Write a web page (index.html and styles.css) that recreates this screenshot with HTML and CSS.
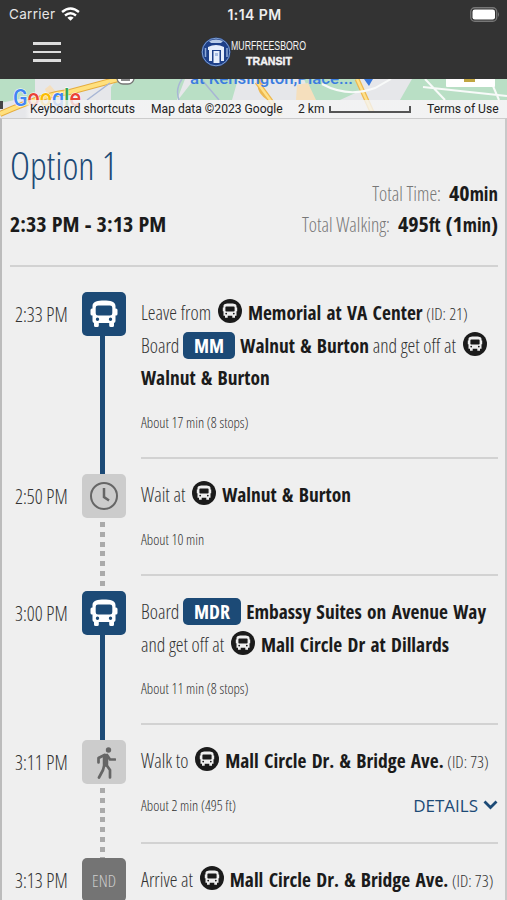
FILE: index.html
```html
<!DOCTYPE html>
<html lang="en">
<head>
<meta charset="utf-8">
<title>Murfreesboro Transit</title>
<link rel="stylesheet" href="styles.css">
</head>
<body>
<svg class="defs" width="0" height="0" aria-hidden="true">
  <symbol id="bus" viewBox="0 0 28 28">
    <path fill-rule="evenodd" d="M14 .5C8 .5 2.500 1.500 2.500 6v2.500H2Q.5 8.500 .5 10v4Q.5 15.500 2 15.500h.5V21q0 1.600 1.500 2v2.500Q4 27 5.500 27h1.800q1.500 0 1.500-1.500V23h10.400v2.500q0 1.500 1.500 1.500h1.800q1.500 0 1.500-1.500V23q1.500-.4 1.500-2v-5.500h.5q1.500 0 1.500-1.500v-4q0-1.500-1.500-1.500h-.5V6C25.500 1.500 20 .5 14 .5zM8 5.500h12q2.300 0 2.300 2.300v5.400q0 2.300-2.300 2.300H8q-2.300 0-2.300-2.300V7.800q0-2.300 2.300-2.300zM7.500 17.500a1.700 1.700 0 1 1 0 3.400a1.700 1.700 0 1 1 0-3.400zM20.500 17.500a1.700 1.700 0 1 1 0 3.400a1.700 1.700 0 1 1 0-3.400z"/>
  </symbol>
  <symbol id="stop" viewBox="0 0 24 24">
    <circle cx="12" cy="12" r="12" fill="#1b1b1b"/>
    <path fill="#efefef" fill-rule="evenodd" d="M12 4.500c-4 0-6.500.6-6.500 2.500v1.500H4.800v3.800h.7v4.400h1.500v2h2.700v-2h4.600v2h2.700v-2h1.500v-4.400h.7V8.500h-.7V7c0-1.900-2.500-2.500-6.500-2.500zM8.200 7.500h7.600q.8 0 .8.8v3.400q0 .8-.8.8H8.200q-.8 0-.8-.8V8.300q0-.8.8-.8zM8.200 13.700a.9.900 0 1 1 0 1.800a.9.900 0 1 1 0-1.800zM15.800 13.700a.9.900 0 1 1 0 1.800a.9.900 0 1 1 0-1.800z"/>
  </symbol>
</svg>

<header class="top">
  <div class="status">
    <div class="carrier">Carrier
      <svg class="wifi" viewBox="0 0 18 13"><g fill="none" stroke="#fff" stroke-width="2.300"><path d="M1 4.600Q9-2 17 4.600"/><path d="M3.800 7.900Q9 3.600 14.200 7.900"/></g><path fill="#fff" d="M9 13 6 10q3-2.300 6 0z"/></svg>
    </div>
    <div class="clock">1:14 PM</div>
    <svg class="battery" viewBox="0 0 30 15"><rect x=".75" y=".75" width="26" height="13.500" rx="4" fill="none" stroke="#777" stroke-width="1.300"/><rect x="2.500" y="2.500" width="22.500" height="10" rx="2.300" fill="#fff"/><path d="M28 5q2 2.500 0 5z" fill="#777"/></svg>
  </div>
  <nav class="bar">
    <div class="burger"><i></i><i></i><i></i></div>
    <div class="brand">
      <svg class="seal" viewBox="0 0 30 30"><circle cx="15" cy="15" r="14.500" fill="#1e4089"/><circle cx="15" cy="15" r="13.800" fill="none" stroke="#7f9fd0" stroke-width="1"/><path d="M8 4q7-3 14 0l-2 2H10z" fill="#b9cce8"/><path d="M7 10q8-4 16 0v3H7zM8 13h3v11H8zM12.500 14h6v12h-6zM20 13h3v11h-3z" fill="#e6eefb"/><path d="M14 16h3v3h-3z" fill="#a9bfe4"/><path d="M4.500 11v9M26 11v9" stroke="#8fabd8" stroke-width="1.500"/></svg>
      <svg class="wordmark" viewBox="0 0 76 30"><text class="word-a" x="0" y="13" textLength="75" lengthAdjust="spacingAndGlyphs">MURFREESBORO</text><text class="word-b" x="15" y="28" textLength="46" lengthAdjust="spacingAndGlyphs">TRANSIT</text></svg>
    </div>
  </nav>
</header>

<section class="map">
  <svg class="tiles" viewBox="0 0 507 39">
    <rect width="507" height="39" fill="#e6e7ea"/>
    <path d="M0 0h35v17L0 24zM111 8l6-8h68l-8 21h-66zM178 21l14-18 10-3h36l-6 21zM304 0h52l8 10-24 11h-28zM412 0h95v21H400z" fill="#b9dfc5"/>
    <path d="M45 10l5-4 7 8-8 6zM297 6l11-2 8 17h-20z" fill="#f5dfbd"/>
    <path d="M0 35Q45 15 70 13L118 0" fill="none" stroke="#e5ac3e" stroke-width="6"/><path d="M0 35Q45 15 70 13L118 0" fill="none" stroke="#ffe07d" stroke-width="4"/>
    <path d="M357 0l15 33M257 3l24 33M261 0q-4 12 8 19" fill="none" stroke="#edb850" stroke-width="5"/><path d="M357 0l15 33M257 3l24 33" fill="none" stroke="#ffe18a" stroke-width="2.500"/>
    <path d="M322 5Q348 19 375 9l16-9M425 0l20 21M423 8l84 9M490 0l9 21" fill="none" stroke="#f8faf9" stroke-width="2"/>
    <path d="M87 21l23-17M182 0q-7 10-3 21M202 1l17 20" fill="none" stroke="#a8b6d5" stroke-width="1.500"/>
    <rect x="117" y="-10" width="17" height="15" rx="6" fill="#fff" stroke="#777" stroke-width="1.300"/><path d="M121 1h9" stroke="#666" stroke-width="1.500"/>
    <path d="M364 0h9q-2 3-4 7q-3-4-5-7" fill="#3878dc"/>
    <text class="place" x="190" y="5" textLength="163" lengthAdjust="spacingAndGlyphs">at Kensington,Place...</text>
    <rect x="446" y="-8" width="49" height="16" rx="1" fill="#fff"/><path d="M464 0h11v3h-11z" fill="#c0a541"/>
    <path d="M0 22h3v8H0z" fill="#444"/>
    <text class="google" x="13" y="27" textLength="68" lengthAdjust="spacingAndGlyphs"><tspan fill="#4285f4">G</tspan><tspan fill="#ea4335">o</tspan><tspan fill="#fbbc04">o</tspan><tspan fill="#4285f4">g</tspan><tspan fill="#34a853">l</tspan><tspan fill="#ea4335">e</tspan></text>
  </svg>
  <div class="attribution">
    <span class="keys">Keyboard shortcuts</span><span class="data">Map data ©2023 Google</span><span class="scale">2 km <i></i></span><span class="terms">Terms of Use</span>
  </div>
</section>

<main class="panel">
  <div class="summary">
    <div>
      <h1>Option 1</h1>
      <div class="range">2:33 PM - 3:13 PM</div>
    </div>
    <div class="totals">
      <div><span class="label">Total Time:</span><b>40<small>min</small></b></div>
      <div><span class="label">Total Walking:</span><b>495<small>ft</small> (1<small>min</small>)</b></div>
    </div>
  </div>

  <div class="step ride s1">
    <div class="time">2:33 PM</div>
    <div class="rail"><div class="tile blue"><svg><use href="#bus"/></svg></div></div>
    <div class="body">
      <p>Leave from <svg class="stop"><use href="#stop"/></svg> <b>Memorial at VA Center</b> <span class="id">(ID: 21)</span></p>
      <p>Board <span class="route">MM</span> <b>Walnut &amp; Burton</b> and get off at <svg class="stop"><use href="#stop"/></svg></p>
      <p><b class="flush">Walnut &amp; Burton</b></p>
      <div class="about"><span>About 17 min (8 stops)</span></div>
    </div>
  </div>

  <div class="step s2">
    <div class="time">2:50 PM</div>
    <div class="rail"><div class="tile"><svg viewBox="0 0 28 28"><circle cx="14" cy="14" r="13" fill="none" stroke="#666" stroke-width="2"/><path d="M14 6v9l5 3.500" fill="none" stroke="#666" stroke-width="2.500"/></svg></div></div>
    <div class="body">
      <p>Wait at <svg class="stop"><use href="#stop"/></svg> <b>Walnut &amp; Burton</b></p>
      <div class="about"><span>About 10 min</span></div>
    </div>
  </div>

  <div class="step ride s3">
    <div class="time">3:00 PM</div>
    <div class="rail"><div class="tile blue"><svg><use href="#bus"/></svg></div></div>
    <div class="body">
      <p>Board <span class="route">MDR</span> <b>Embassy Suites on Avenue Way</b></p>
      <p>and get off at <svg class="stop"><use href="#stop"/></svg> <b>Mall Circle Dr at Dillards</b></p>
      <div class="about"><span>About 11 min (8 stops)</span></div>
    </div>
  </div>

  <div class="step s4">
    <div class="time">3:11 PM</div>
    <div class="rail"><div class="tile"><svg class="walker" viewBox="0 0 20 32"><circle cx="12.500" cy="3" r="2.700" fill="#666"/><path fill="none" stroke="#666" stroke-linejoin="round" stroke-linecap="round" d="M9.500 9.500v7.500" stroke-width="5.500"/><path fill="none" stroke="#666" stroke-linejoin="round" stroke-linecap="round" stroke-width="2.700" d="M8.500 8l-6 3v4.500M11 8l3 4.500h5M8.500 17l-1.500 6-4 7.500M10.500 18l3.500 5v7.500"/></svg></div></div>
    <div class="body">
      <p>Walk to <svg class="stop"><use href="#stop"/></svg> <b>Mall Circle Dr. &amp; Bridge Ave.</b> <span class="id">(ID: 73)</span></p>
      <div class="about"><span>About 2 min (495 ft)</span><a class="details">DETAILS<svg viewBox="0 0 15 10"><path d="M1.500 1.500l6 6 6-6" fill="none" stroke="#1c4a76" stroke-width="2.800"/></svg></a></div>
    </div>
  </div>

  <div class="step s5">
    <div class="time">3:13 PM</div>
    <div class="rail"><div class="tile end">END</div></div>
    <div class="body">
      <p>Arrive at <svg class="stop"><use href="#stop"/></svg> <b>Mall Circle Dr. &amp; Bridge Ave.</b> <span class="id">(ID: 73)</span></p>
    </div>
  </div>
</main>
</body>
</html>
```
FILE: styles.css
```css
* { box-sizing: border-box; }
html, body { height: 900px; overflow: hidden; }
body { margin: 0; display: flex; flex-direction: column; background: #efefef; font-family: "Open Sans", sans-serif; }
h1, p { margin: 0; font-weight: 300; }
.defs { display: none; }

.top { height: 79px; flex: none; background: #333; color: #fff; font-family: Inter, sans-serif; }
.status { height: 28px; display: grid; grid-template-columns: 1fr auto 1fr; align-items: center; padding: 0 7px 0 9px; font-size: 13.500px; }
.carrier { display: flex; align-items: center; gap: 6px; color: #e6e6e6; letter-spacing: .3px; }
.wifi { width: 19px; height: 14px; }
.clock { font-weight: 600; font-size: 14px; letter-spacing: .4px; color: #eee; }
.battery { width: 30px; height: 15px; justify-self: end; }
.bar { height: 51px; display: flex; align-items: center; padding-left: 33px; }
.burger { width: 28px; display: grid; gap: 6px; margin-top: -3px; }
.burger i { height: 2.500px; background: #ddd; }
.brand { display: flex; margin: -3px 0 0 140px; }
.seal { width: 30px; height: 30px; }
.wordmark { width: 76px; height: 30px; fill: #f4f4f4; overflow: visible; }
.word-a { font: 13px "Liberation Sans", sans-serif; }
.word-b { font: bold 11px "Liberation Sans", sans-serif; stroke: #f4f4f4; stroke-width: .4px; }

.map { height: 39px; flex: none; display: grid; overflow: hidden; }
.tiles, .attribution { grid-area: 1 / 1; }
.tiles { width: 507px; height: 39px; }
.place { font: 500 17px Roboto, sans-serif; fill: #3b7de0; }
.google { font: 500 23px Roboto, sans-serif; stroke: #fff; stroke-width: 1px; paint-order: stroke; }
.attribution { align-self: end; height: 18px; display: flex; align-items: center; font: 12.100px Roboto, sans-serif; color: #222; background: linear-gradient(90deg, transparent 25px, rgba(245, 245, 245, .8) 30px); white-space: nowrap; }
.attribution span { flex: none; }
.keys { padding-left: 30px; width: 151px; }
.data { width: 147px; }
.scale { width: 129px; display: flex; align-items: center; gap: 4px; }
.scale i { width: 82px; height: 7px; border: 2px solid #555; border-top: 0; }

.panel { flex: 1; min-height: 0; overflow: hidden; border-left: 2px solid #bcbcbc; border-right: 2px solid #c8c8c8; border-top: 1px solid #ccc; padding: 0 7px 0 8px; font-stretch: 75%; color: #1b1b1b; }
.summary { height: 148px; display: flex; justify-content: space-between; border-bottom: 2px solid #d2d2d2; padding-top: 18px; }
h1 { font-size: 38px; line-height: 56px; color: #1c4a76; }
.range { font-size: 22px; line-height: 30px; font-weight: 700; margin-top: 15px; white-space: nowrap; word-spacing: 1.200px; }
.totals { padding-top: 40px; text-align: right; font-size: 22px; line-height: 30.500px; white-space: nowrap; word-spacing: 1px; }
.totals div { height: 30.500px; }
.label { font-weight: 300; font-size: 19.500px; color: #777; margin-right: 8px; word-spacing: 0; }
small { font-size: 19px; }

.step { display: grid; grid-template-columns: 72px 44px 1fr; column-gap: 0; }
.s1 { height: 182px; margin-top: 25px; }
.s2 { height: 117px; }
.s3 { height: 149px; }
.s4 { height: 118px; }
.s5 { height: 118px; }
.time { font-size: 19.500px; line-height: 45px; font-weight: 300; padding-left: 5px; color: #333; white-space: nowrap; }
.rail { display: flex; flex-direction: column; align-items: center; }
.rail::after { content: ""; flex: 1; width: 5px; margin-right: 3px; margin-top: 4px; background: repeating-linear-gradient(#aaa 0 5px, transparent 5px 9.800px); }
.ride .rail::after { background: #1c4a76; margin-top: 0; }
.tile { width: 44px; height: 44px; flex: none; border-radius: 5px; background: #ccc; display: flex; align-items: center; justify-content: center; }
.tile svg { width: 28px; height: 28px; fill: #fff; }
.tile .walker { width: 20px; height: 32px; margin: 2px 0 0 4px; }
.blue { background: #1c4a76; }
.end { background: #747474; color: #ccc; font-size: 17px; font-weight: 300; }
.body { margin: 0 0 15px 15px; padding-top: 5px; border-bottom: 2px solid #d2d2d2; font-size: 19.500px; font-weight: 300; white-space: nowrap; display: flex; flex-direction: column; }
.s4 .body { margin-bottom: 14px; }
.s5 .body { padding-top: 6px; }
.body p { height: 32.500px; line-height: 32.500px; color: #333; }
.body b { color: #1b1b1b; font-weight: 700; word-spacing: 1.800px; margin-left: 1.500px; }
.body .flush { margin-left: 0; }
.stop { width: 24px; height: 24px; vertical-align: -3px; margin: 0 1px 0 3px; }
.id { font-size: 17px; }
.route { display: inline-block; height: 27px; line-height: 27px; padding: 0 11px; border-radius: 5px; background: #1c4a76; color: #fff; font-weight: 700; }
.about { display: flex; justify-content: space-between; align-items: center; height: 24px; margin-top: 15.500px; font-size: 14.500px; color: #333; }
.details { display: flex; align-items: center; gap: 5px; font-stretch: 100%; font-weight: 400; font-size: 17px; color: #1c4a76; }
.details svg { width: 15px; height: 10px; }
```
